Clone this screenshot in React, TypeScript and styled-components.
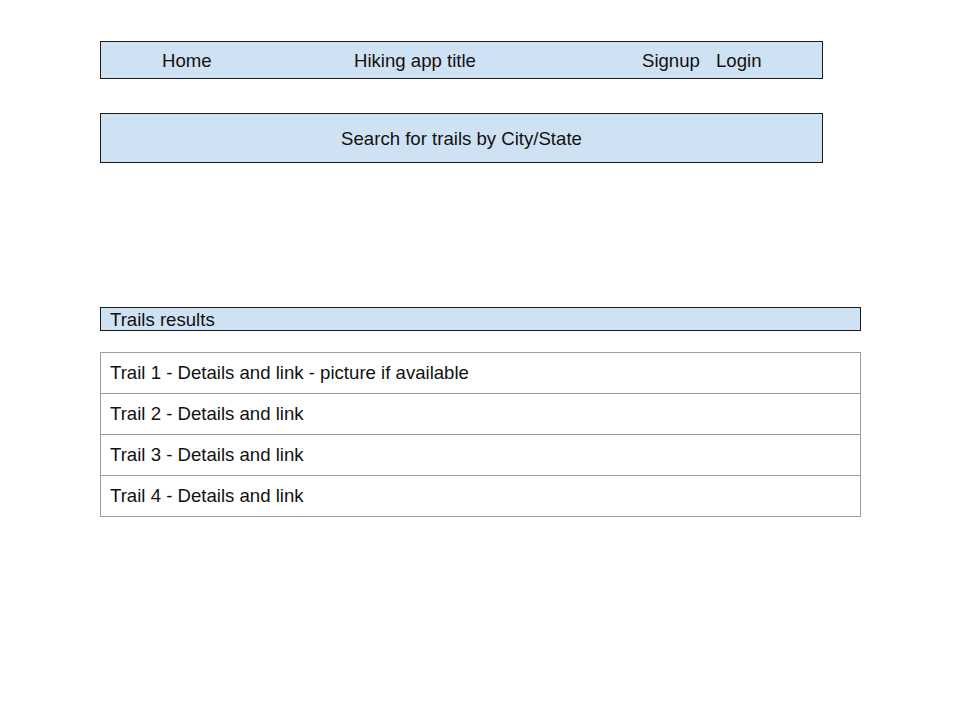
import React from "react";
import styled, { createGlobalStyle } from "styled-components";

const Global = createGlobalStyle`
  html, body { margin: 0; padding: 0; background: #ffffff; }
  body { font-family: "Liberation Sans", Arial, sans-serif; color: #111; }
`;

const Page = styled.div`
  padding: 41px 0 0 100px;
  display: flex;
  flex-direction: column;
  align-items: flex-start;
  font-size: 18.6px;
`;

const Header = styled.nav`
  box-sizing: border-box;
  width: 723px;
  height: 38px;
  background: #cfe2f3;
  border: 1px solid #1a1a1a;
  display: flex;
  align-items: center;
  padding: 2px 0 0 61px;
`;

const NavCell = styled.span<{ $w?: number }>`
  width: ${(p) => (p.$w ? `${p.$w}px` : "auto")};
  flex: none;
  white-space: nowrap;
`;

const SearchBox = styled.div`
  box-sizing: border-box;
  margin-top: 34px;
  width: 723px;
  height: 50px;
  background: #cfe2f3;
  border: 1px solid #1a1a1a;
  display: flex;
  align-items: center;
  justify-content: center;
  padding-top: 2px;
`;

const ResultsBar = styled.div`
  box-sizing: border-box;
  margin-top: 144px;
  width: 761px;
  height: 24px;
  background: #cfe2f3;
  border: 1px solid #1a1a1a;
  display: flex;
  align-items: center;
  padding: 2px 0 0 9px;
`;

const List = styled.ul`
  box-sizing: border-box;
  list-style: none;
  margin: 21px 0 0 0;
  padding: 0;
  width: 761px;
  border: 1px solid #9e9e9e;
`;

const Row = styled.li`
  height: 40px;
  display: flex;
  align-items: center;
  padding-left: 9px;
  & + & {
    border-top: 1px solid #9e9e9e;
  }
`;

const trails = [
  "Trail 1 - Details and link - picture if available",
  "Trail 2 - Details and link",
  "Trail 3 - Details and link",
  "Trail 4 - Details and link",
];

export default function App() {
  return (
    <>
      <Global />
      <Page>
        <Header>
          <NavCell $w={192}>Home</NavCell>
          <NavCell $w={288}>Hiking app title</NavCell>
          <NavCell $w={74}>Signup</NavCell>
          <NavCell>Login</NavCell>
        </Header>
        <SearchBox>Search for trails by City/State</SearchBox>
        <ResultsBar>Trails results</ResultsBar>
        <List>
          {trails.map((t) => (
            <Row key={t}>{t}</Row>
          ))}
        </List>
      </Page>
    </>
  );
}
